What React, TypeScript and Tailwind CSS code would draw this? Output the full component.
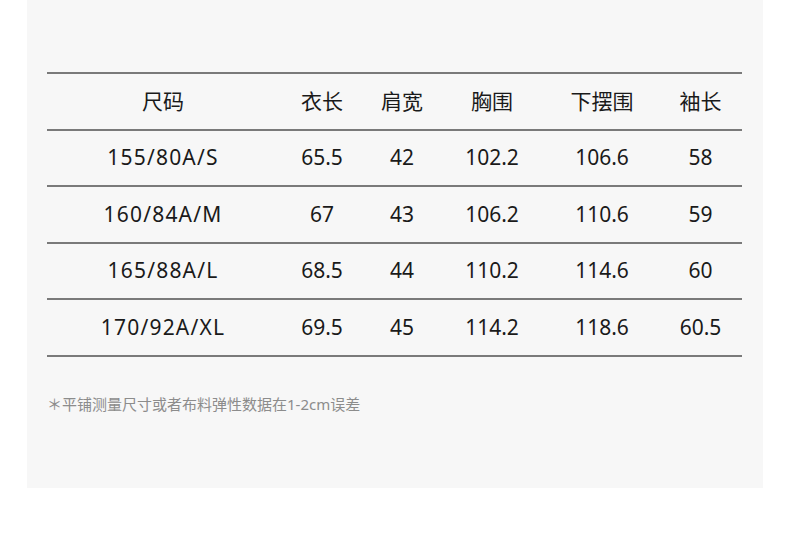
import React from 'react';

const headers = ['尺码', '衣长', '肩宽', '胸围', '下摆围', '袖长'];

const rows = [
    ['155/80A/S', '65.5', '42', '102.2', '106.6', '58'],
    ['160/84A/M', '67', '43', '106.2', '110.6', '59'],
    ['165/88A/L', '68.5', '44', '110.2', '114.6', '60'],
    ['170/92A/XL', '69.5', '45', '114.2', '118.6', '60.5'],
];

const grid = 'grid grid-cols-[232px_86px_74px_106px_114px_83px] items-center text-center';

export default function App() {
    return (
        <div
            className="min-h-[542px] w-[790px] bg-white"
            style={{ fontFamily: '"Noto Sans", "Noto Sans CJK SC", sans-serif' }}
        >
            <div className="mx-[27px] h-[488px] bg-[#f7f7f7] pt-[72px]">
                <div className="mx-[20px] w-[695px]">
                    <div className="h-[2px] bg-[#7a7a7a]" />
                    <div className={`${grid} h-[54.5px] text-[21px] text-[#1a1a1a]`}>
                        {headers.map(h => (
                            <div key={h}>{h}</div>
                        ))}
                    </div>
                    {rows.map(row => (
                        <div key={row[0]}>
                            <div className="h-[2px] bg-[#7a7a7a]" />
                            <div className={`${grid} h-[54.5px] text-[21px] text-[#1a1a1a]`}>
                                {row.map((cell, i) => (
                                    <div key={i} className={i === 0 ? 'tracking-[1.2px]' : ''}>
                                        {cell}
                                    </div>
                                ))}
                            </div>
                        </div>
                    ))}
                    <div className="h-[2px] bg-[#7a7a7a]" />
                    <p className="mt-[36px] text-[15px] leading-[22px] text-[#8c8c8c]">＊平铺测量尺寸或者布料弹性数据在1-2cm误差</p>
                </div>
            </div>
        </div>
    );
}
